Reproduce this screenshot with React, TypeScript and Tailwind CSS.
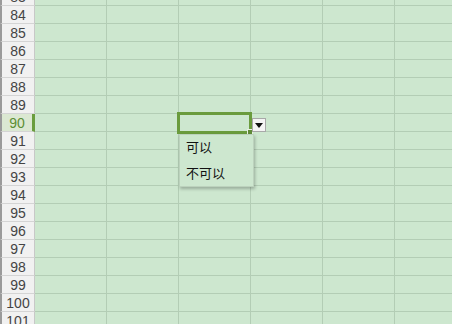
const rows = Array.from({ length: 20 }, (_, i) => 83 + i);
const cols = [0, 1, 2, 3, 4, 5];

export default function App() {
  return (
    <div className="relative w-[452px] h-[324px] overflow-hidden bg-[#cde7cf]" style={{ fontFamily: '"Liberation Sans", "Noto Sans CJK SC", sans-serif' }}>
      <div className="-mt-[12px] flex flex-col">
        {rows.map((r) => {
          const active = r === 90;
          return (
            <div key={r} className="flex h-[18px]">
              <div
                className={
                  'w-[35px] shrink-0 flex items-center justify-center border-l-2 border-l-[#9a9a9a] border-b border-b-[#d4d4d4] border-r text-[14px] leading-none pt-[1px] ' +
                  (active
                    ? 'bg-[#dbe8d2] text-[#5b8f34] border-r-[3px] border-r-[#6a9d3e]'
                    : 'bg-[#f1f1f1] text-[#444] border-r-[#c8c8c8]')
                }
              >
                {r}
              </div>
              {cols.map((c) => (
                <div key={c} className="w-[72px] shrink-0 border-r border-b border-[#b3cdb5]" />
              ))}
            </div>
          );
        })}
      </div>

      {/* selected cell */}
      <div className="absolute left-[177px] top-[112px] w-[75px] h-[22px] border-[3px] border-[#6a9b3d]" />
      <div className="absolute left-[247px] top-[129px] w-[6px] h-[6px] bg-[#5f8a38] border border-[#e6f0e0]" />

      {/* dropdown button */}
      <div className="absolute left-[252px] top-[118px] w-[14px] h-[14px] bg-[#f4f4f4] border border-[#a8a8a8] flex items-center justify-center">
        <svg width="8" height="5" viewBox="0 0 8 5">
          <path d="M0 0 H8 L4 5 Z" fill="#111" />
        </svg>
      </div>

      {/* list */}
      <div className="absolute left-[179px] top-[134px] w-[75px] h-[53px] bg-[#cde7cf] shadow-[1px_2px_3px_rgba(0,0,0,0.25)] border border-[#bcd2bd] flex flex-col text-[13px] text-[#111]">
        <div className="h-[26px] flex items-center pl-[6px]">可以</div>
        <div className="h-[26px] flex items-center pl-[6px]">不可以</div>
      </div>
    </div>
  );
}
